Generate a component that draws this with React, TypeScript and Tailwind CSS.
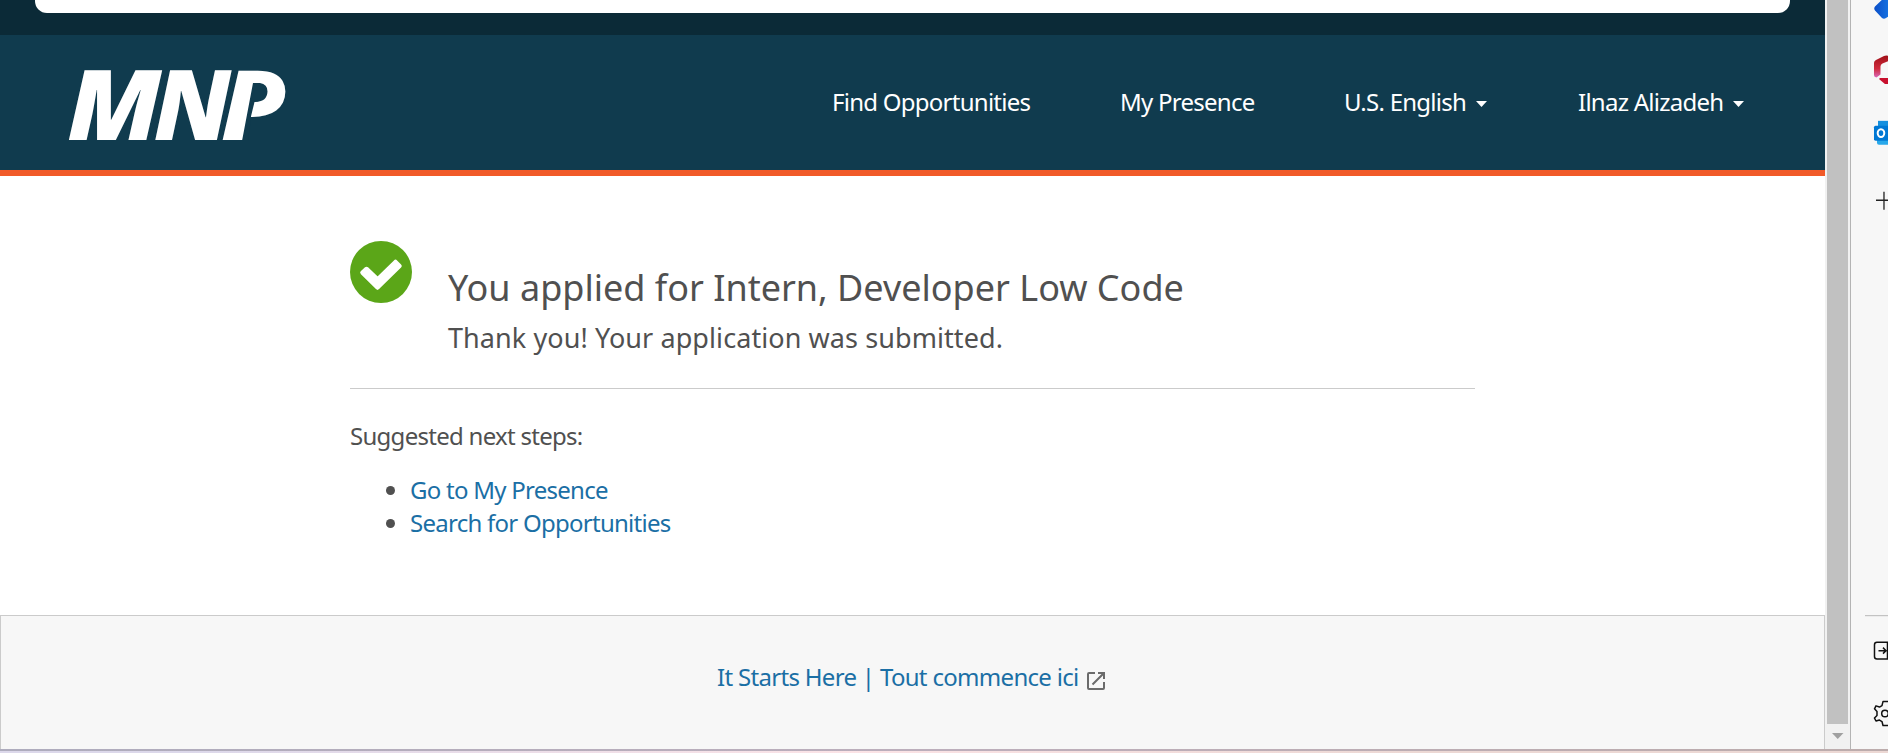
import React from "react";

function Logo() {
  return (
    <svg width="222" height="76" viewBox="66 67 222 76" className="block overflow-visible" role="img" aria-label="MNP">
      <g fill="#fff" fontSize="98" fontStyle="italic" fontWeight="900">
        <text transform="translate(67.300 140) scale(1.06 1)" fontFamily="'Open Sans', sans-serif" fontWeight="800">M</text>
        <text transform="translate(153.700 140)" fontFamily="'Noto Sans', sans-serif">N</text>
        <text transform="translate(221 140) scale(1.075 1)" fontFamily="'Noto Sans', sans-serif">P</text>
      </g>
      <path d="M253 83h7Q267.500 84 267.500 91.500Q267 102 254.500 102L251 116.300V118L248 141H242Z" fill="#103b4e" />
    </svg>
  );
}

function Caret() {
  return (
    <svg width="11" height="6" viewBox="0 0 11 6" className="mt-1 ml-[10px] block">
      <path d="M0 0h11L5.500 6z" fill="#fff" />
    </svg>
  );
}

function Header() {
  return (
    <header className="flex h-[141px] shrink-0 items-start border-b-6 border-[#f15a29] bg-[#103b4e] pt-8 pl-[66px]">
      <Logo />
      <nav className="mt-[19px] ml-[544px] flex text-[24px] leading-[32px] tracking-[-0.74px] whitespace-nowrap text-white">
        <a className="w-[288px]"><span>Find Opportunities</span></a>
        <a className="w-[224px]"><span>My Presence</span></a>
        <a className="flex w-[234px] items-center"><span>U.S. English</span><Caret /></a>
        <a className="flex items-center"><span>Ilnaz Alizadeh</span><Caret /></a>
      </nav>
    </header>
  );
}

function Sidebar() {
  return (
    <aside className="flex w-[38px] shrink-0 flex-col overflow-hidden border-l border-[#b4b4b4] bg-[#f7f7f7]">
      <svg width="38" height="750" viewBox="1851 0 38 750" className="block">
        <defs>
          <linearGradient id="b" x1="0" x2="1"><stop offset="0" stopColor="#0c4fc8" /><stop offset="1" stopColor="#1b8cf5" /></linearGradient>
          <linearGradient id="r" x1="0" y1="0" x2="0" y2="1"><stop offset="0" stopColor="#a01018" /><stop offset=".6" stopColor="#d02a3c" /><stop offset="1" stopColor="#d868b8" /></linearGradient>
        </defs>
        <path d="M1875 6.500L1886 -4h14v14L1886 18q-2 1.500-4 0l-7-7.500q-1.500-2 0-4z" fill="url(#b)" />
        <path d="M1874 63q0-2 2-3l8-4q2-.8 5 0v5l-6.500 2.500q-2 1-2 3v8l-4 3q-2.500 0-2.500-2.500z" fill="url(#r)" />
        <path d="M1879 79l1-1h10v6h-5z" fill="#c8102e" />
        <path d="M1878 121h12v7h-12z" fill="#1490df" />
        <path d="M1877 138h13v7h-11q-2 0-2-2z" fill="#28a8ea" />
        <rect x="1874" y="126" width="20" height="15" rx="1.500" fill="#0078d4" />
        <ellipse cx="1881" cy="133.300" rx="3.300" ry="4" fill="none" stroke="#fff" strokeWidth="2" />
        <path d="M1876 200.500h14M1884 192v18" stroke="#222" strokeWidth="1.300" />
        <path d="M1865 616.500h25" stroke="#b8b8b8" />
        <rect x="1874.500" y="643" width="22" height="17" rx="2.500" fill="none" stroke="#111" strokeWidth="1.500" />
        <path d="M1878.500 651.500h7M1883 648.500l3 3-3 3M1887.500 643v17" fill="none" stroke="#111" strokeWidth="1.500" />
        <path d="M1889 702.500h-6l-1 4-2.500 1.500-3.500-1.200-1.500 3 2.500 2.700v4l-2.500 2.500 1.500 3 3.500-1 2.500 1.500 1 4h6" fill="none" stroke="#111" strokeWidth="1.500" strokeLinejoin="round" />
        <circle cx="1885" cy="714.500" r="3.300" fill="none" stroke="#111" strokeWidth="1.500" />
      </svg>
    </aside>
  );
}

function Scrollbar() {
  return (
    <div className="flex w-[25px] shrink-0 flex-col items-start bg-[#f1f1f1] pl-[2px]">
      <div className="h-[725px] w-[21px] bg-[#c1c1c1]" />
      <svg width="21" height="25" viewBox="0 0 21 25" className="block">
        <path d="M5 9h11.500L10.700 15z" fill="#a0a0a0" />
      </svg>
    </div>
  );
}

export default function App() {
  return (
    <div className="flex h-[753px] w-[1888px] flex-col overflow-hidden bg-white font-['Noto_Sans',sans-serif] text-[#505050]">
      <div className="flex h-[749px] shrink-0 overflow-hidden">
        <div className="flex w-[1825px] shrink-0 flex-col">
          <div className="h-[35px] shrink-0 bg-[#0b2a37] px-[35px]">
            <div className="h-[13px] rounded-b-[12px] bg-white" />
          </div>
          <Header />
          <main className="h-[439px] shrink-0 px-[350px] pt-[65px]">
            <div className="flex h-[148px] border-b border-[#cbcbcb]">
              <svg width="62" height="62" viewBox="0 0 62 62" className="block">
                <circle cx="31" cy="31" r="31" fill="#5ba618" />
                <path d="M12.500 31.700L16.500 28 27.500 38.500 45.500 21 49.500 25 27.500 46.500z" fill="#fff" stroke="#fff" strokeWidth="4.500" strokeLinejoin="round" />
              </svg>
              <div className="ml-[36px] pt-[22px] whitespace-nowrap">
                <h1 className="text-[36px] leading-[50px]"><span>You applied for Intern, Developer Low Code</span></h1>
                <p className="text-[27px] leading-[50px] tracking-[0.08px]"><span>Thank you! Your application was submitted.</span></p>
              </div>
            </div>
            <p className="mt-[30px] text-[24px] leading-[33px] tracking-[-0.72px]"><span>Suggested next steps:</span></p>
            <ul className="mt-[21px] list-disc pl-[60px] text-[24px] leading-[33px] tracking-[-0.74px]">
              <li><a className="text-[#1b6fa5]">Go to My Presence</a></li>
              <li><a className="text-[#1b6fa5]">Search for Opportunities</a></li>
            </ul>
          </main>
          <footer className="flex flex-1 items-start border border-b-0 border-[#cbcbcb] bg-[#f7f7f7] pt-[44px] pl-[716px] text-[24px] leading-[33px] tracking-[-0.69px] whitespace-nowrap text-[#1b6fa5]">
            <a><span>It Starts Here | Tout commence ici</span></a>
            <svg width="18" height="18" viewBox="0 0 18 18" className="mt-[12px] ml-[8px] block" fill="none" stroke="#6b6b6b" strokeWidth="2">
              <path d="M8 1H2Q1 1 1 2v14q0 1 1 1h14q1 0 1-1v-6M11 1h6v6M17 1L5.500 12.500" />
            </svg>
          </footer>
        </div>
        <Scrollbar />
        <Sidebar />
      </div>
      <div className="h-[2px] shrink-0 bg-linear-to-r from-[#aeacbd] via-[#bcaebb] to-[#bcacac]" />
      <div className="h-[2px] shrink-0 bg-linear-to-r from-[#dcd8ea] from-10% via-[#fbe3e6] via-45% to-[#ecd8d4] to-75%" />
    </div>
  );
}
